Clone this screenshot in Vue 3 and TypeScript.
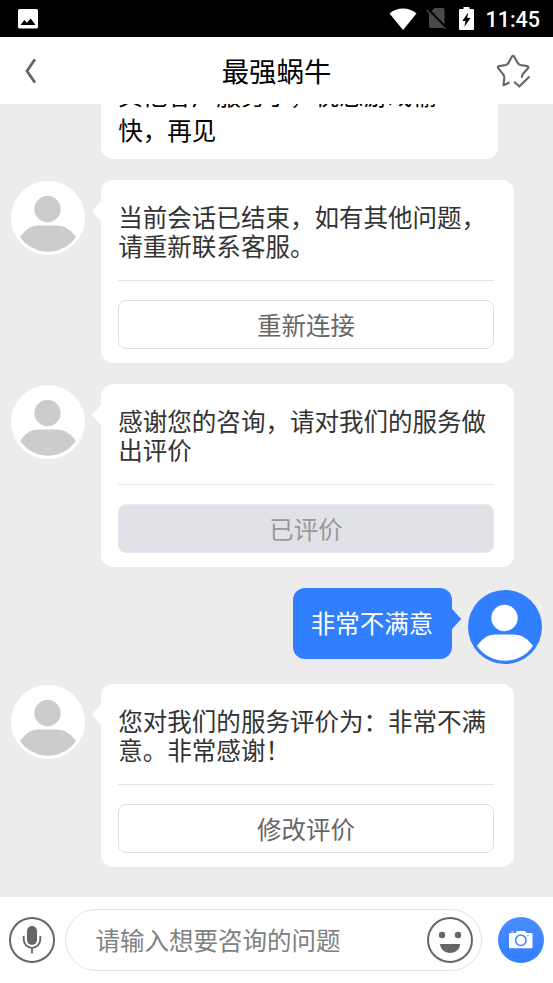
<script setup lang="ts">
interface Message {
  id: number
  from: 'agent' | 'user'
  lines: string[]
  action?: string
  done?: boolean
  plain?: boolean
}

const title = '最强蜗牛'
const messages: Message[] = [
  { id: 1, from: 'agent', lines: ['其他客户服务了，祝您游戏愉', '快，再见'], plain: true },
  { id: 2, from: 'agent', lines: ['当前会话已结束，如有其他问题，', '请重新联系客服。'], action: '重新连接' },
  { id: 3, from: 'agent', lines: ['感谢您的咨询，请对我们的服务做', '出评价'], action: '已评价', done: true },
  { id: 4, from: 'user', lines: ['非常不满意'] },
  { id: 5, from: 'agent', lines: ['您对我们的服务评价为：非常不满', '意。非常感谢！'], action: '修改评价' },
]
</script>

<template>
  <div class="screen">
    <div class="status">
      <svg class="picture" viewBox="0 0 20 20">
        <rect width="20" height="19.5" rx="1.6" fill="#fff" />
        <path d="M2.500 16 6.300 11l2.600 2.700L12.700 9.500l4.800 6.500z" fill="#000" />
      </svg>
      <div class="indicators">
        <svg class="wifi" viewBox="0 0 28 22">
          <path d="M.5 5.600C4.500 2 9 .4 14 .4S23.500 2 27.500 5.600L14 22z" fill="#fff" />
        </svg>
        <svg class="sim" viewBox="0 0 22 23">
          <path d="M9.500 1H18q1.500 0 1.500 1.500V21H6q-2 0-2-2V6.500z" fill="#494949" />
          <path d="M2.500 1.500 22 21.500" stroke="#000" stroke-width="2.200" />
          <path d="M1.500 3 20.500 22" stroke="#494949" stroke-width="1.500" />
        </svg>
        <svg class="battery" viewBox="0 0 15 23">
          <path d="M4.500 0h6v2H14q1 0 1 1v19q0 1-1 1H1q-1 0-1-1V3q0-1 1-1h3.500z" fill="#fff" />
          <path d="M9.300 5.500 3.300 14h3.200L5.300 20 11.500 11H8.200z" fill="#000" />
        </svg>
        <span class="clock">11:45</span>
      </div>
    </div>

    <header class="header">
      <svg class="back" viewBox="0 0 12 24">
        <path d="M11 .3 3 12 11 23.700" fill="none" stroke="#666" stroke-width="2.800" />
      </svg>
      <h1>{{ title }}</h1>
      <svg class="star" viewBox="0 0 36 36" fill="none" stroke="#666" stroke-width="2.100" stroke-linejoin="round">
        <path d="M14.500 29.500 8.500 32.200 9.300 24.800Q9.400 22.200 7.600 20.600L3.200 15.200Q2.200 13.600 4.200 13.100L10.700 12Q12.700 11.500 13.700 9.500L16.800 3.700Q18 1.800 19.200 3.700L22.500 9.500Q23.500 11.500 25.500 12L32 13.100Q34 13.600 33 15.200L28.500 20.200Q26.700 22.200 26.800 24.800" />
        <path d="M19.200 28.700 24.300 33.500 34.500 23.500" stroke-width="2.200" />
      </svg>
    </header>

    <main class="chat">
      <section v-for="m in messages" :key="m.id" class="row" :class="[m.from, { plain: m.plain }]">
        <svg class="avatar" viewBox="0 0 74 74">
          <circle class="disc" cx="37" cy="37" r="37" />
          <circle class="person" cx="36.500" cy="28" r="13.200" />
          <path class="person" d="M9 56C14 49 19.500 44.500 27.500 44.500h18C53.500 44.500 60 49 65 56A34 34 0 0 1 9 56z" />
        </svg>
        <div class="bubble">
          <p v-for="line in m.lines" :key="line" class="line">{{ line }}</p>
          <template v-if="m.action">
            <hr class="rule" />
            <button class="action" :class="{ done: m.done }" :disabled="m.done">{{ m.action }}</button>
          </template>
        </div>
      </section>
    </main>

    <footer class="composer">
      <svg class="tool mic" viewBox="0 0 46 46">
        <circle cx="23" cy="23" r="22" fill="none" stroke="#666" stroke-width="2" />
        <rect x="18" y="9" width="10" height="19" rx="5" fill="#666" />
        <path d="M14.700 19v3.500a8.300 8.300 0 0 0 16.600 0V19M23 30.800V36.500" fill="none" stroke="#666" stroke-width="1.800" />
      </svg>
      <div class="field">
        <span class="hint">请输入想要咨询的问题</span>
        <svg class="tool" viewBox="0 0 46 46">
          <circle cx="23" cy="23" r="22" fill="none" stroke="#666" stroke-width="2" />
          <circle cx="15" cy="18" r="3.200" fill="#666" />
          <circle cx="31" cy="18" r="3.200" fill="#666" />
          <path d="M13 27h20.200c-.5 5.500-4.600 9-10.100 9S13.500 32.500 13 27z" fill="#666" />
        </svg>
      </div>
      <svg class="tool camera" viewBox="0 0 46 46">
        <defs>
          <linearGradient id="shade" x1="0" y1="0" x2="0" y2="1">
            <stop offset="0" stop-color="#4c8dff" />
            <stop offset="1" stop-color="#317eff" />
          </linearGradient>
        </defs>
        <circle cx="23" cy="23" r="23" fill="url(#shade)" />
        <path d="M12 16h5.500l1.500-2h8l1.500 2H33.500q1 0 1 1v13.300q0 1-1 1H12q-1 0-1-1V17q0-1 1-1z" fill="#fff" />
        <path d="M13.500 15.500v-1.200H16v1.200z" fill="#b9d2ff" />
        <circle cx="22.800" cy="23.300" r="5.200" fill="#fff" stroke="#4385ff" stroke-width="1.500" />
        <circle cx="30" cy="18.700" r=".8" fill="#4385ff" />
      </svg>
    </footer>
  </div>
</template>

<style>
body {
  margin: 0;
}
</style>

<style scoped>
.screen {
  width: 553px;
  height: 983px;
  display: flex;
  flex-direction: column;
  overflow: hidden;
  background: #ececec;
  font-family: 'Noto Sans CJK SC', sans-serif;
}
svg {
  display: block;
  flex: none;
}
.status {
  height: 37px;
  flex: none;
  box-sizing: border-box;
  padding: 0 13px 0 18px;
  display: flex;
  align-items: center;
  justify-content: space-between;
  background: #000;
}
.picture {
  width: 20px;
  height: 20px;
}
.indicators {
  display: flex;
  align-items: center;
}
.wifi {
  width: 28px;
  height: 22px;
  margin-right: 8px;
}
.sim {
  width: 22px;
  height: 23px;
  margin-right: 12px;
}
.battery {
  width: 15px;
  height: 23px;
  margin-right: 11px;
}
.clock {
  color: #fff;
  font: 500 21.500px/35px Roboto, sans-serif;
  padding-top: 2px;
}
.header {
  height: 67px;
  flex: none;
  box-sizing: border-box;
  padding: 0 22px 0 24px;
  display: flex;
  align-items: center;
  justify-content: space-between;
  background: #fff;
}
.back {
  width: 12px;
  height: 24px;
  margin-right: 22px;
}
h1 {
  margin: -2px 0 0;
  color: #000;
  font-size: 27.400px;
  line-height: 40px;
  font-weight: 400;
}
.star {
  width: 36px;
  height: 36px;
}
.chat {
  flex: 1;
  min-height: 0;
  box-sizing: border-box;
  padding: 0 11px 30px;
  display: flex;
  flex-direction: column;
  justify-content: flex-end;
  gap: 21px;
  overflow: hidden;
}
.row {
  flex: none;
  display: flex;
  align-items: flex-start;
  gap: 16.300px;
}
.row.user {
  flex-direction: row-reverse;
  margin-bottom: -1.500px;
}
.row:last-child {
  margin-bottom: 0.500px;
}
.avatar {
  width: 74px;
  height: 74px;
  margin-top: 1px;
}
.user .avatar {
  margin-top: 2px;
}
.disc {
  fill: #fff;
}
.person {
  fill: #ccc;
}
.user .disc {
  fill: #317eff;
}
.user .person {
  fill: #fff;
}
.bubble {
  position: relative;
  box-sizing: border-box;
  width: 412.500px;
  padding: 22px 20px 14px 17px;
  border-radius: 12px;
  background: #fff;
  color: #333;
}
.bubble::before {
  content: '';
  position: absolute;
  top: 20px;
  left: -9.500px;
  width: 10px;
  height: 22px;
  background: #fff;
  clip-path: polygon(0 50%, 100% 0, 100% 100%);
}
.plain .bubble {
  width: 397px;
  padding-top: 80px;
  padding-bottom: 12px;
  color: #000;
}
.plain .line {
  line-height: 35px;
}
.user .bubble {
  width: 159px;
  height: 71px;
  padding: 20px 18px;
  color: #fff;
  background: #317eff;
}
.user .bubble::before {
  left: auto;
  right: -9.500px;
  background: #317eff;
  clip-path: polygon(100% 50%, 0 0, 0 100%);
}
.line {
  margin: 0;
  font-size: 24.530px;
  line-height: 29px;
  white-space: nowrap;
}
.rule {
  height: 1px;
  margin: 20px 0 19px;
  border: 0;
  background: #e6e6e6;
}
.action {
  display: block;
  width: 100%;
  height: 49px;
  padding: 0;
  border: 1px solid #dfdfdf;
  border-radius: 8px;
  background: #fff;
  color: #666;
  font: 24.500px/47px 'Noto Sans CJK SC', sans-serif;
}
.action.done {
  background: #e1e2e7;
  border-color: #e8e9ed;
  color: #999;
}
.composer {
  height: 86px;
  flex: none;
  box-sizing: border-box;
  padding: 0 9px;
  display: flex;
  align-items: center;
  justify-content: space-between;
  background: #fff;
}
.tool {
  width: 46px;
  height: 46px;
}
.field {
  width: 417px;
  height: 62px;
  box-sizing: border-box;
  margin-right: 7px;
  padding: 0 8px 0 30px;
  display: flex;
  align-items: center;
  justify-content: space-between;
  border: 1px solid #e1e2e6;
  border-radius: 31px;
  color: #808080;
  font-size: 24.500px;
}
.hint {
  padding-bottom: 2px;
}
</style>
